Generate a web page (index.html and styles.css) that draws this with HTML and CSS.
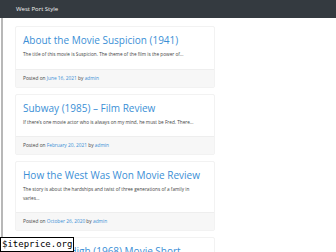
FILE: index.html
```html
<!DOCTYPE html>
<html>
<head>
<meta charset="utf-8">
<link rel="stylesheet" href="styles.css">
</head>
<body>
<header class="topbar"><span class="brand">West Port Style</span></header>
<div class="page">
  <main class="posts">
    <article class="card">
      <div class="card-body">
        <h2 class="title"><a href="#">About the Movie Suspicion (1941)</a></h2>
        <p class="excerpt">The title of this movie is Suspicion. The theme of the film is the power of...</p>
      </div>
      <div class="card-footer">Posted on <a href="#">June 16, 2021</a> by <a href="#">admin</a></div>
    </article>
    <article class="card">
      <div class="card-body">
        <h2 class="title"><a href="#">Subway (1985) – Film Review</a></h2>
        <p class="excerpt">If there’s one movie actor who is always on my mind, he must be Fred. There...</p>
      </div>
      <div class="card-footer">Posted on <a href="#">February 20, 2021</a> by <a href="#">admin</a></div>
    </article>
    <article class="card">
      <div class="card-body">
        <h2 class="title"><a href="#">How the West Was Won Movie Review</a></h2>
        <p class="excerpt">The story is about the hardships and twist of three generations of a family in varies...</p>
      </div>
      <div class="card-footer">Posted on <a href="#">October 26, 2020</a> by <a href="#">admin</a></div>
    </article>
    <article class="card">
      <div class="card-body">
        <h2 class="title"><a href="#">Hang ’Em High (1968) Movie Short Review</a></h2>
      </div>
    </article>
  </main>
</div>
<div class="watermark">$iteprice.org</div>
</body>
</html>
```
FILE: styles.css
```css
html, body {
  margin: 0;
  padding: 0;
  background: #fff;
  font-family: "Open Sans", "Noto Sans", sans-serif;
  color: #333;
  overflow: hidden;
  height: 252px;
}
.topbar {
  height: 18px;
  background: #343a40;
  display: flex;
  align-items: center;
  padding-left: 16px;
}
.brand {
  color: #f2f2f2;
  font-size: 6px;
  line-height: 8px;
}
.page {
  padding-left: 1px;
  height: 234px;
  overflow: hidden;
}
.posts {
  border-left: 2px solid #b8b8b8;
  padding: 8px 0 0 12px;
  width: 200px;
  min-height: 240px;
  display: flex;
  flex-direction: column;
  gap: 6px;
}
.card {
  border: 1px solid #f2f2f2;
  border-radius: 2px;
  background: #fff;
}
.card-body {
  padding: 7px 7px 10px;
}
.title {
  margin: 0 0 3px;
  font-size: 10px;
  line-height: 13px;
  font-weight: 400;
}
.title a {
  color: #3b8fd6;
  text-decoration: none;
}
.excerpt {
  margin: 0;
  font-size: 4.7px;
  line-height: 8.5px;
  color: #444;
  padding-right: 6px;
}
.card-footer {
  background: #f7f7f7;
  border-top: 1px solid #eeeeee;
  padding: 6px 7px;
  font-size: 4.8px;
  line-height: 5px;
  color: #444;
}
.card-footer a {
  color: #3b8fd6;
  text-decoration: none;
}
.watermark {
  position: absolute;
  left: 0;
  top: 237px;
  background: #fff;
  border: 1px solid #000;
  font-family: "DejaVu Sans Mono", monospace;
  font-size: 9px;
  line-height: 13px;
  padding: 0 1px;
  color: #000;
}
```
